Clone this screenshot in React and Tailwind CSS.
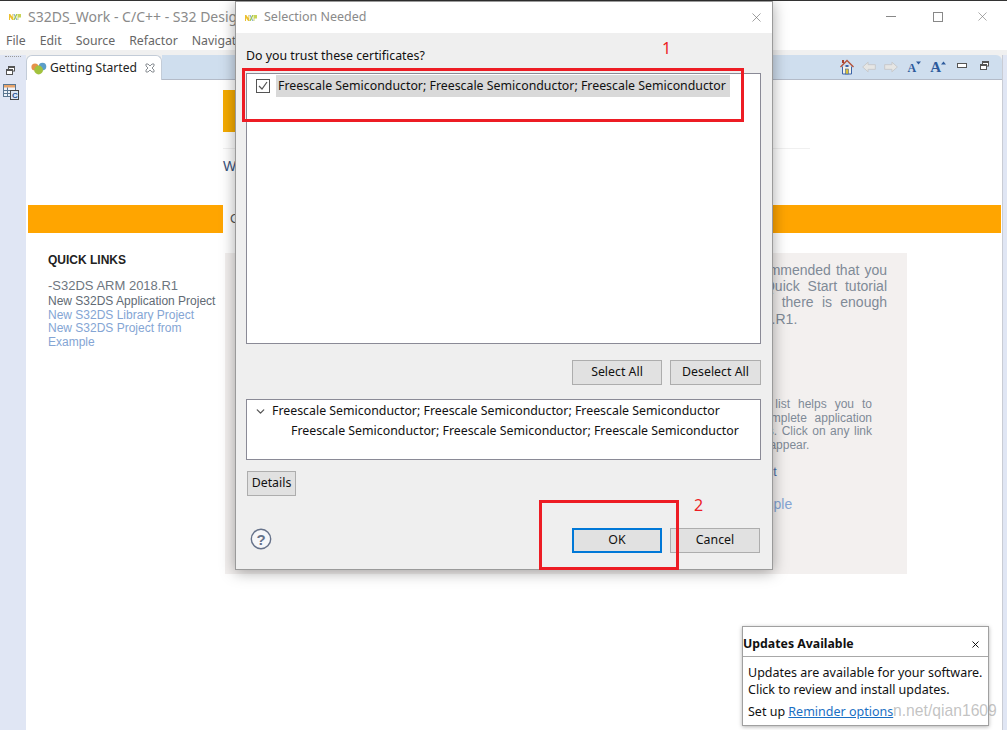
import React from "react";
import { X, ChevronDown } from "lucide-react";

const uiFont = { fontFamily: '"Noto Sans", "Open Sans", sans-serif' };

function NxpLogo() {
  return (
    <svg width="12" height="6" viewBox="0 0 14 7">
      <path d="M0 7V0h1.5L4 3.6V0h1v7H3.6L1.2 3.4V7z" fill="#ecc030" />
      <path d="M5 0h1.6L10 7H8.4z" fill="#8cb4d0" />
      <path d="M10 0H8.4L5 7h1.6z" fill="#a4c648" />
      <path d="M10 0h4v4h-3v3h-1z" fill="#c8d458" />
    </svg>
  );
}

function RestoreIcon() {
  return (
    <svg width="9" height="9" viewBox="0 0 9 9" fill="none" stroke="#555">
      <rect x="2.5" y="0.5" width="6" height="4.5" fill="#fff" />
      <rect x="2.5" y="0.5" width="6" height="1" fill="#777" />
      <rect x="0.5" y="3.5" width="6" height="5" fill="#fff" />
      <rect x="0.5" y="3.5" width="6" height="1" fill="#777" />
    </svg>
  );
}

function TableIcon() {
  return (
    <svg width="16" height="16" viewBox="0 0 16 16">
      <rect x="0.5" y="0.5" width="12" height="12" fill="#eef3fa" stroke="#5a7690" />
      <rect x="1" y="1" width="11" height="2.5" fill="#e7a46a" />
      <path d="M0.5 6.5h12M0.5 9.5h12M4.5 3.5v9" stroke="#5a7690" fill="none" />
      <rect x="7.5" y="6.5" width="8" height="9" fill="#dce6f2" stroke="#444" />
      <text x="9" y="14" fontSize="8" fontWeight="700" fill="#27508f" fontFamily="Liberation Sans">C</text>
    </svg>
  );
}

function WelcomeIcon() {
  return (
    <svg width="16" height="13" viewBox="0 0 16 13">
      <circle cx="4" cy="5" r="3.6" fill="#e6924a" />
      <circle cx="11.5" cy="4.6" r="3.8" fill="#5b9ec9" />
      <circle cx="7.6" cy="8" r="4.4" fill="#a2c23e" />
    </svg>
  );
}

function CloseTabIcon() {
  return (
    <svg width="10" height="10" viewBox="0 0 10 10" fill="none" stroke="#8a8f94">
      <path d="M1 1l2 0 2 2 2-2 2 0 0 2-2 2 2 2 0 2-2 0-2-2-2 2-2 0 0-2 2-2-2-2z" />
    </svg>
  );
}

function HomeIcon() {
  return (
    <svg width="14" height="16" viewBox="0 0 14 16">
      <path d="M2.5 7.5V15h9V7.5" fill="#f6f1e4" stroke="#3b63a8" />
      <path d="M0.5 8L7 1.5 13.5 8" fill="none" stroke="#b5533c" strokeWidth="1.4" />
      <rect x="2" y="1" width="2" height="3" fill="#a8402c" />
      <rect x="5.5" y="6" width="3" height="2" fill="#3b63a8" />
      <rect x="5.5" y="10" width="3" height="5" fill="#d9c23a" stroke="#3b63a8" strokeWidth="0.6" />
    </svg>
  );
}

function NavArrow({ flip }) {
  return (
    <svg width="14" height="12" viewBox="0 0 15 12" className={flip ? "-scale-x-100" : ""}>
      <path d="M0.7 6L6.5 0.8V3.5H14.3V8.5H6.5V11.2z" fill="#e6e6e4" stroke="#c6c8ca" />
    </svg>
  );
}

function FontIcon({ big, up }) {
  return (
    <span className="flex items-start">
      <span className={big ? "font-bold text-[15px] leading-[16px] text-[#2c5a9c]" : "font-bold text-[12px] leading-[14px] mt-0.5 text-[#2c5a9c]"} style={{ fontFamily: '"Liberation Serif", serif' }}>A</span>
      <svg width="5" height="4" viewBox="0 0 7 5" className="mt-0.5">
        <path d={up ? "M3.5 0.5L7 4.5H0z" : "M0 0.5h7L3.5 4.5z"} fill="#2c5a9c" />
      </svg>
    </span>
  );
}

function QuestionIcon() {
  return (
    <svg width="22" height="22" viewBox="0 0 22 22">
      <circle cx="11" cy="11" r="9.7" fill="#f6f7f9" stroke="#66728a" strokeWidth="1.4" />
      <text x="11" y="16.5" textAnchor="middle" fontSize="15" fontWeight="700" fill="#66728a" fontFamily="Liberation Sans">?</text>
    </svg>
  );
}

function DialogButton({ children, className = "" }) {
  return (
    <button className={`h-[25px] bg-[#e1e1e1] border border-[#adadad] text-[12.35px] text-[#111] leading-none ${className}`}>
      {children}
    </button>
  );
}

function Justified({ children }) {
  return <div className="[text-align-last:justify] whitespace-nowrap">{children}</div>;
}

function Dialog() {
  return (
    <div className="absolute left-[235px] top-[1px] w-[538px] h-[569px] flex flex-col bg-[#efefef] border border-[#9a9a9a] shadow-[0_2px_14px_rgba(0,0,0,0.35)]" style={uiFont}>
      <div className="h-[31px] shrink-0 bg-white flex items-center pl-[9px] pr-[8px]">
        <NxpLogo />
        <span className="ml-[7px] text-[12.5px] text-[#8a8a8a]">Selection Needed</span>
        <X size={15} strokeWidth={1} className="ml-auto text-[#666]" />
      </div>
      <div className="flex-1 flex flex-col pl-[10px] pr-[11px]">
        <div className="mt-[14px] h-[18px] text-[12.35px] leading-[18px] text-[#111]">Do you trust these certificates?</div>
        <div className="mt-[8px] h-[271px] bg-white border border-[#8a8a96] pl-[8px] pt-[1px]">
          <div className="flex items-center">
            <span className="w-[14px] h-[14px] border border-[#555] bg-white flex items-center justify-center mr-[6px] ml-[1px]">
              <svg width="10" height="10" viewBox="0 0 10 10" fill="none" stroke="#555" strokeWidth="1.2"><path d="M1 5l3 3 5-7" /></svg>
            </span>
            <span className="bg-[#d9d9d9] h-[22px] leading-[22px] pl-[2px] pr-[4px] text-[12.35px] text-[#111] whitespace-nowrap">Freescale Semiconductor; Freescale Semiconductor; Freescale Semiconductor</span>
          </div>
        </div>
        <div className="mt-[16px] flex justify-end gap-[8px]">
          <DialogButton className="w-[90px]">Select All</DialogButton>
          <DialogButton className="w-[91px]">Deselect All</DialogButton>
        </div>
        <div className="mt-[14px] h-[61px] bg-white border border-[#8a8a96] pt-[1px] text-[12.35px] text-[#111] leading-[20px] whitespace-nowrap">
          <div className="flex items-center pl-[7px]">
            <ChevronDown size={13} strokeWidth={2.4} className="text-[#555] mr-[5px]" />
            Freescale Semiconductor; Freescale Semiconductor; Freescale Semiconductor
          </div>
          <div className="pl-[44px]">Freescale Semiconductor; Freescale Semiconductor; Freescale Semiconductor</div>
        </div>
        <div className="mt-[9px]">
          <DialogButton className="w-[49px] ml-[1px]">Details</DialogButton>
        </div>
        <div className="mt-[32px] flex items-center pr-[1px]">
          <span className="ml-[4px] -mt-[3px]"><QuestionIcon /></span>
          <DialogButton className="w-[90px] ml-auto border-2 !border-[#0078d7]">OK</DialogButton>
          <DialogButton className="w-[90px] ml-[8px]">Cancel</DialogButton>
        </div>
      </div>
    </div>
  );
}

function UpdatesPopup() {
  return (
    <div className="absolute left-[742px] top-[626px] w-[247px] h-[100px] bg-white border border-[#a0a0a0] shadow-[0_1px_4px_rgba(0,0,0,0.3)] text-[12.5px] text-[#111]" style={uiFont}>
      <div className="h-[30px] border-b border-[#a8a8a8] flex items-center justify-between pr-[7px] pt-[5px]">
        <span className="font-bold text-[12.3px] leading-none">Updates Available</span>
        <X size={11} strokeWidth={2} className="text-black" />
      </div>
      <div className="pl-[5px] pt-[7px] leading-[17px]">
        <div>Updates are available for your software.</div>
        <div>Click to review and install updates.</div>
        <div className="mt-[5px] whitespace-nowrap">Set up <span className="text-[#1a6fc4] underline">Reminder options</span></div>
      </div>
    </div>
  );
}

export default function App() {
  return (
    <div className="relative w-[1007px] h-[730px] overflow-hidden bg-[#f0f0f0] flex flex-col" style={{ fontFamily: '"Liberation Sans", Arial, sans-serif' }}>
      <div className="h-[1px] shrink-0 bg-[#333]" />
      {/* title bar */}
      <div className="h-[31px] shrink-0 bg-white flex items-center pl-[9px]" style={uiFont}>
        <NxpLogo />
        <span className="ml-[7px] text-[14px] text-[#8a8a8a] whitespace-nowrap">S32DS_Work - C/C++ - S32 Design Studio</span>
        <div className="ml-auto flex items-center">
          <span className="w-[10px] h-[1px] bg-[#888] mr-[37px]" />
          <span className="w-[10px] h-[10px] border border-[#888] mr-[32px]" />
          <X size={15} strokeWidth={1} className="mr-[17px] text-[#777]" />
        </div>
      </div>
      {/* menu */}
      <div className="h-[18px] shrink-0 bg-white flex items-center pl-[6px] gap-[14px] text-[12.3px] text-[#666]" style={uiFont}>
        <span>File</span><span>Edit</span><span>Source</span><span>Refactor</span><span>Navigate</span>
      </div>
      <div className="flex-1 flex min-h-0 pt-[5px] bg-[#f0f0f0]">
        {/* left trim */}
        <div className="w-[26px] shrink-0 bg-[#e0e6f4] flex flex-col items-center pt-[1px]">
          <span className="w-[16px] border-t border-dotted border-[#999]" />
          <span className="mt-[9px] mr-[6px]"><RestoreIcon /></span>
          <span className="mt-[9px] mr-[4px]"><TableIcon /></span>
        </div>
        {/* editor area */}
        <div className="w-[977px] flex flex-col border-r border-[#c9ccd4] rounded-tl-[6px] min-h-0">
          <div className="h-[25px] shrink-0 flex">
            <div className="w-[136px] h-[25px] bg-white rounded-t-[6px] border border-b-0 border-[#c3ccd8] flex items-center pl-[4px] text-[12.1px] text-[#222]" style={uiFont}>
              <WelcomeIcon />
              <span className="ml-[3px]">Getting Started</span>
              <span className="ml-[8px]"><CloseTabIcon /></span>
            </div>
            <div className="flex-1 bg-[#cfdeee] border-b border-[#b4bbc8] rounded-tr-[6px] flex items-center justify-end pr-[13px]">
              <HomeIcon />
              <span className="ml-[8px]"><NavArrow /></span>
              <span className="ml-[8px]"><NavArrow flip /></span>
              <span className="ml-[9px]"><FontIcon up={false} /></span>
              <span className="ml-[9px]"><FontIcon big up /></span>
              <span className="ml-[11px] w-[10px] h-[5px] bg-white border border-[#555] mb-[4px]" />
              <span className="ml-[13px] mb-[3px]"><RestoreIcon /></span>
            </div>
          </div>
          <div className="flex-1 bg-white pl-[2px] min-h-0 overflow-hidden">
            {/* header block behind the dialog */}
            <div className="ml-[195px] mt-[10px] w-[20px] h-[42px] bg-[#f5ab00]" />
            <div className="ml-[195px] mt-[16px] w-[587px] h-[1px] bg-[#f0f0f0]" />
            <div className="ml-[195px] mt-[7px] text-[14px] leading-[20px] text-[#39527c]">Welcome</div>
            <div className="mt-[29px] h-[28px] w-[973px] bg-[#ffa500] flex">
              <div className="ml-[195px] w-[12px] h-full bg-white shrink-0" />
              <span className="ml-[-5px] text-[13px] leading-[28px] text-[#555]">G</span>
            </div>
            <div className="mt-[20px] flex">
              <div className="w-[197px] shrink-0 pl-[20px] text-[12px] leading-[13.5px]">
                <div className="font-bold text-[#222] leading-[14px]">QUICK LINKS</div>
                <div className="mt-[11px] text-[13px] leading-[16px] text-[#6e7680]">-S32DS ARM 2018.R1</div>
                <div className="text-[#616a74] mt-[1px]">New S32DS Application Project</div>
                <div className="text-[#84a5d4] w-[170px]">New S32DS Library Project</div>
                <div className="text-[#84a5d4] w-[170px]">New S32DS Project from Example</div>
              </div>
              <div className="w-[682px] h-[321px] bg-[#f3f0ef] shrink-0 pl-[433px] pr-[20px] pt-[9px]">
                <div className="text-[14px] leading-[16.2px] text-[#7f8a97]">
                  <Justified>To start, it is recommended that you</Justified>
                  <Justified>go through the Quick Start tutorial</Justified>
                  <Justified>In these tutorials, there is enough</Justified>
                  <div>S32DS ARM 2018.R1.</div>
                </div>
                <div className="mt-[71px] pr-[15px] text-[12px] leading-[13.7px] text-[#7f8a97]">
                  <Justified>The getting started list helps you to</Justified>
                  <Justified>you through the complete application</Justified>
                  <Justified>in development steps. Click on any link</Justified>
                  <div>for the help topics to appear.</div>
                </div>
                <div className="mt-[12px] text-[12.5px] leading-[14px] text-[#4a6ea8] whitespace-nowrap">Create a New Project</div>
                <div className="mt-[17px] ml-[2px] text-[14px] leading-[16px] text-[#84a5d4] whitespace-nowrap">Create from Example</div>
              </div>
            </div>
          </div>
        </div>
        <div className="flex-1 bg-[#e0e6f4]" />
      </div>

      <Dialog />

      {/* annotations drawn over the screenshot */}
      <div className="absolute left-[242px] top-[68px] w-[502px] h-[54px] border-[3px] border-[#ed1c24]" />
      <div className="absolute left-[539px] top-[500px] w-[140px] h-[70px] border-[3px] border-[#ed1c24]" />
      <span className="absolute left-[662px] top-[38px] text-[16px] leading-[20px] text-[#ed1c24]" style={uiFont}>1</span>
      <span className="absolute left-[694px] top-[495px] text-[16px] leading-[20px] text-[#ed1c24]" style={uiFont}>2</span>

      <UpdatesPopup />
      <span className="absolute left-[893px] top-[702px] text-[15.7px] leading-[18px] text-[#9a9a9a]/60">n.net/qian1609</span>
    </div>
  );
}
